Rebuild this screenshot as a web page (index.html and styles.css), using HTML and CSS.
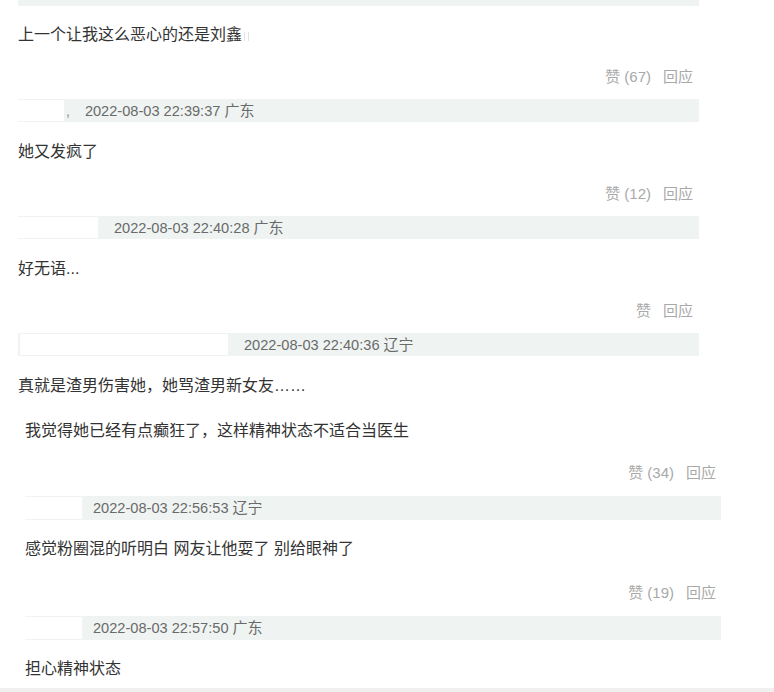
FILE: index.html
```html
<!DOCTYPE html>
<html lang="zh-CN">
<head>
<meta charset="utf-8">
<title>评论</title>
<link rel="stylesheet" href="styles.css">
</head>
<body>
<div class="page">
  <div class="main">
    <div class="bar bar-top"></div>
    <p class="text first">上一个让我这么恶心的还是刘鑫<span class="mark"></span></p>
    <div class="actions"><span>赞 (67)</span><span>回应</span></div>

    <div class="bar"><span class="name n1"></span><span class="comma">,</span><span class="date d1">2022-08-03 22:39:37 <span class="loc">广东</span></span></div>
    <p class="text">她又发疯了</p>
    <div class="actions"><span>赞 (12)</span><span>回应</span></div>

    <div class="bar"><span class="name n2"></span><span class="date d2">2022-08-03 22:40:28 <span class="loc">广东</span></span></div>
    <p class="text">好无语...</p>
    <div class="actions"><span>赞</span><span>回应</span></div>

    <div class="bar"><span class="name n3"></span><span class="date d2">2022-08-03 22:40:36 <span class="loc">辽宁</span></span></div>
    <p class="text">真就是渣男伤害她，她骂渣男新女友……</p>
  </div>

  <div class="nested">
    <p class="text quote">我觉得她已经有点癫狂了，这样精神状态不适合当医生</p>
    <div class="actions"><span>赞 (34)</span><span>回应</span></div>

    <div class="bar tall"><span class="name n4"></span><span class="date d3">2022-08-03 22:56:53 <span class="loc">辽宁</span></span></div>
    <p class="text">感觉粉圈混的听明白 网友让他耍了 别给眼神了</p>
    <div class="actions"><span>赞 (19)</span><span>回应</span></div>

    <div class="bar tall"><span class="name n4"></span><span class="date d3">2022-08-03 22:57:50 <span class="loc">广东</span></span></div>
    <p class="text">担心精神状态</p>
  </div>
</div>
<div class="band"></div>
</body>
</html>
```

FILE: styles.css
```css
html, body {
  margin: 0;
  padding: 0;
  background: #ffffff;
}

body {
  font-family: "Liberation Sans", "Noto Sans CJK SC", sans-serif;
  color: #333333;
  overflow: hidden;
}

.page {
  padding-left: 18px;
}

.main {
  width: 681px;
}

.nested {
  margin-left: 7px;
  width: 696px;
}

.bar {
  display: flex;
  align-items: center;
  height: 23px;
  padding: 1px 0;
  box-sizing: border-box;
  background: #eff4f2;
}

.bar.tall {
  height: 24px;
}

.bar-top {
  height: 6px;
  padding: 0;
}

.name {
  display: block;
  align-self: stretch;
  background: #ffffff;
}

.n1 { width: 46px; }
.n2 { width: 80px; }
.n3 { width: 208px; margin-left: 2px; }
.n4 { width: 57px; }

.comma {
  color: #888888;
  font-size: 14px;
  line-height: 18px;
  margin-left: 2px;
}

.date {
  color: #6a6a6a;
  font-size: 14.6px;
  line-height: 18px;
  white-space: nowrap;
}

.date .loc {
  font-size: 15px;
}

.d1 { margin-left: 15px; }
.d2 { margin-left: 16px; }
.d3 { margin-left: 11px; }

.text {
  margin: 18px 0 0 0;
  font-size: 16px;
  line-height: 24px;
  color: #333333;
}

.text.first {
  margin-top: 17px;
}

.nested .text {
  margin-top: 17px;
}

.nested .text.quote {
  margin-top: 21px;
}

.mark {
  display: inline-block;
  width: 3px;
  height: 9px;
  margin-left: 2px;
  border-left: 1px solid #e4e4e4;
  border-right: 1px solid #e4e4e4;
  vertical-align: -1px;
}

.actions {
  display: flex;
  justify-content: flex-end;
  gap: 12px;
  margin: 18px 0 10px 0;
  padding-right: 6px;
  font-size: 15px;
  line-height: 24px;
  color: #a9a9a9;
}

.nested .actions {
  margin: 18px 0 11px 0;
  padding-right: 5px;
}

.nested .bar + .text + .actions {
  margin-top: 20px;
}

.band {
  margin-top: 7px;
  height: 4px;
  background: #f0f0f0;
}
```
